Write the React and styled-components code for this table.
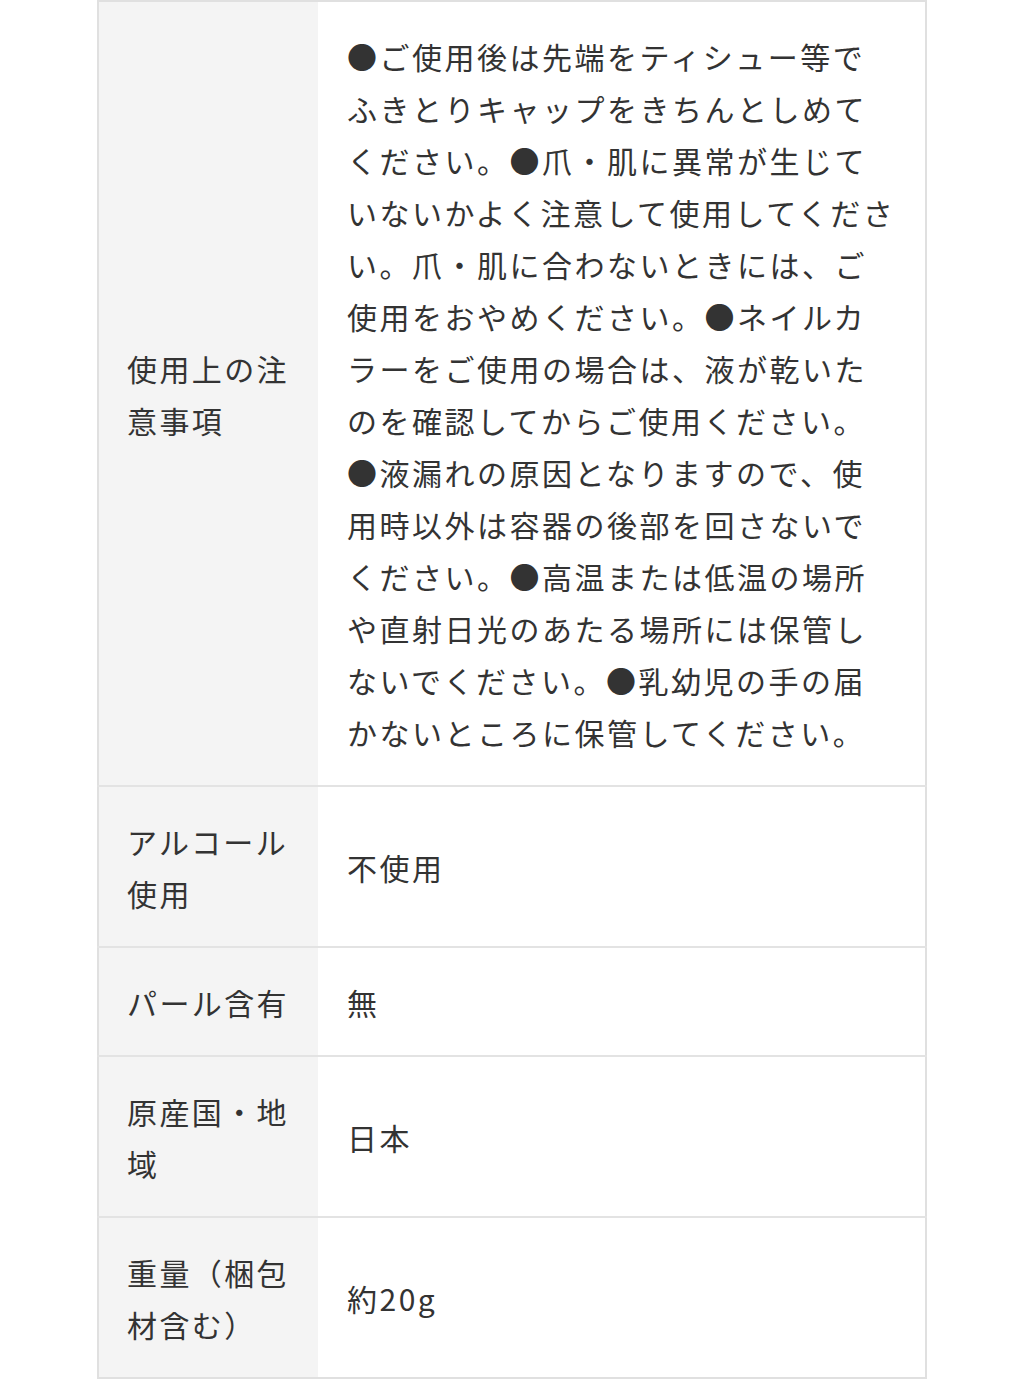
import React from 'react';
import styled, { createGlobalStyle } from 'styled-components';

const GlobalStyle = createGlobalStyle`
  html, body {
    margin: 0;
    padding: 0;
    background: #fff;
  }
  body {
    font-family: "Noto Sans CJK JP", "Noto Sans", sans-serif;
    color: #333;
  }
`;

const Table = styled.table`
  width: 830px;
  margin: 0 auto;
  border-collapse: collapse;
  border: 2px solid #e0e0e0;
  table-layout: fixed;
`;

const Row = styled.tr`
  border-top: 2px solid #e3e3e3;

  &:first-child {
    border-top: none;
  }
`;

const Label = styled.th`
  width: 220px;
  box-sizing: border-box;
  padding: 27.5px 20px 27.5px 28px;
  background: #f4f4f4;
  text-align: left;
  vertical-align: middle;
  font-weight: 400;
  font-size: 30px;
  line-height: 52px;
  letter-spacing: 2.4px;
  color: #333;
  white-space: nowrap;
`;

const Value = styled.td`
  padding: 27.5px 20px 27.5px 29px;
  vertical-align: middle;
  font-size: 30px;
  line-height: 52px;
  letter-spacing: 2.5px;
  color: #333;
  white-space: nowrap;
`;

const lines = (arr) =>
  arr.map((t, i) => (
    <React.Fragment key={i}>
      {i > 0 && <br />}
      {t}
    </React.Fragment>
  ));

const specs = [
  {
    label: ['使用上の注', '意事項'],
    value: [
      '●ご使用後は先端をティシュー等で',
      'ふきとりキャップをきちんとしめて',
      'ください。●爪・肌に異常が生じて',
      'いないかよく注意して使用してくださ',
      'い。爪・肌に合わないときには、ご',
      '使用をおやめください。●ネイルカ',
      'ラーをご使用の場合は、液が乾いた',
      'のを確認してからご使用ください。',
      '●液漏れの原因となりますので、使',
      '用時以外は容器の後部を回さないで',
      'ください。●高温または低温の場所',
      'や直射日光のあたる場所には保管し',
      'ないでください。●乳幼児の手の届',
      'かないところに保管してください。',
    ],
  },
  { label: ['アルコール', '使用'], value: ['不使用'] },
  { label: ['パール含有'], value: ['無'] },
  { label: ['原産国・地', '域'], value: ['日本'] },
  { label: ['重量（梱包', '材含む）'], value: ['約20g'] },
];

const App = () => {
  return (
    <>
      <GlobalStyle />
      <Table>
        <tbody>
          {specs.map((s, i) => (
            <Row key={i}>
              <Label>{lines(s.label)}</Label>
              <Value>{lines(s.value)}</Value>
            </Row>
          ))}
        </tbody>
      </Table>
    </>
  );
};

export default App;
